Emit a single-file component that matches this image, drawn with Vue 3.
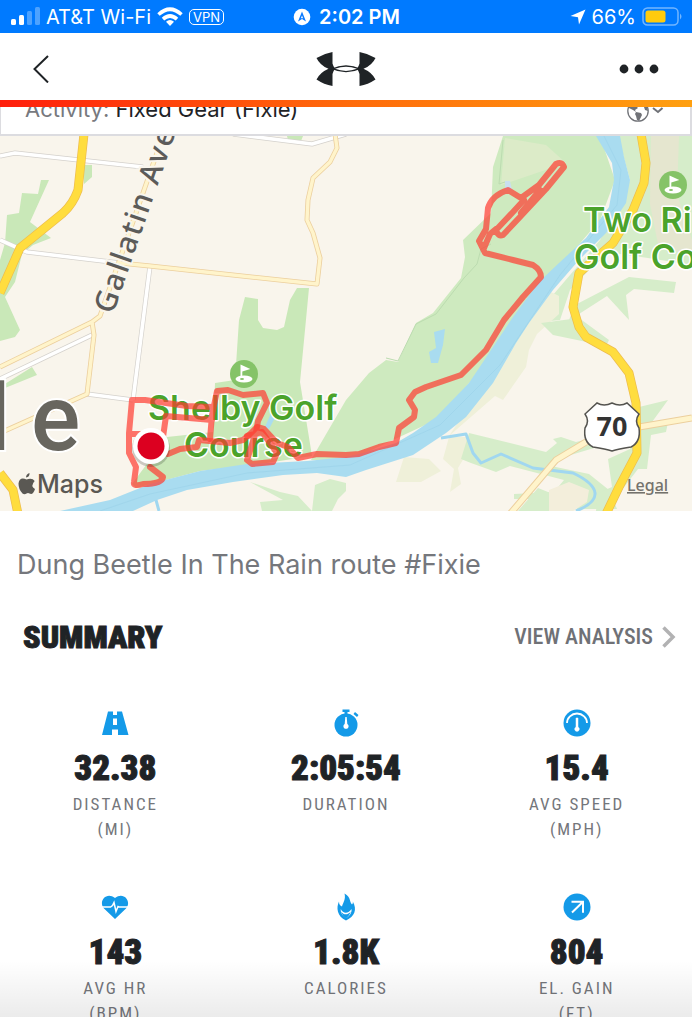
<script setup>
const stats = [
  { icon: 'road', value: '32.38', label: 'DISTANCE', unit: '(MI)' },
  { icon: 'watch', value: '2:05:54', label: 'DURATION', unit: '' },
  { icon: 'gauge', value: '15.4', label: 'AVG SPEED', unit: '(MPH)' },
  { icon: 'heart', value: '143', label: 'AVG HR', unit: '(BPM)' },
  { icon: 'flame', value: '1.8K', label: 'CALORIES', unit: '' },
  { icon: 'arrow', value: '804', label: 'EL. GAIN', unit: '(FT)' },
]
</script>

<template>
  <div class="app">
    <div class="status">
      <div class="status-side">
        <svg width="30" height="20" viewBox="0 0 30 20" fill="#fff">
          <rect x="1" y="12" width="5" height="6" rx="1.5" />
          <rect x="9" y="8" width="5" height="10" rx="1.5" />
          <rect x="17" y="4" width="5" height="14" rx="1.5" opacity=".3" />
          <rect x="25" y="0" width="5" height="18" rx="1.5" opacity=".3" />
        </svg>
        <span>AT&amp;T Wi-Fi</span>
        <svg width="26" height="20" viewBox="0 0 26 20" fill="none" stroke="#fff" stroke-width="3.6">
          <path d="M1.5 7.5Q13-3 24.5 7.5" />
          <path d="M6 12.2Q13 5.8 20 12.2" />
          <path d="M13 19l-4-4.3q4-3.2 8 0z" fill="#fff" stroke="none" />
        </svg>
        <span class="vpn">VPN</span>
      </div>
      <div class="status-mid">
        <svg width="18" height="18" viewBox="0 0 18 18">
          <circle cx="9" cy="9" r="8.3" fill="#fff" />
          <path d="M9 3.5L13 13.5 9 11 5 13.5z" fill="#0a7aff" />
          <path d="M9 7.5l1.2 3L9 10l-1.2.5z" fill="#fff" />
        </svg>
        <b>2:02 PM</b>
      </div>
      <div class="status-side right">
        <svg width="16" height="16" viewBox="0 0 16 16"><path d="M15.5.5L9 15.5 8 8.3.5 7z" fill="#fff" /></svg>
        <span>66%</span>
        <svg width="41" height="20" viewBox="0 0 41 20">
          <rect x="1" y="1" width="35" height="17" rx="4.5" fill="none" stroke="#fff" stroke-opacity=".45" stroke-width="1.5" />
          <rect x="3.5" y="3.5" width="20" height="12" rx="2.5" fill="#ffcb0d" />
          <path d="M38 6.5q3 3 0 6z" fill="#fff" opacity=".45" />
        </svg>
      </div>
    </div>

    <header class="nav">
      <button class="icon-btn" aria-label="Back">
        <svg width="16" height="28" viewBox="0 0 16 28" fill="none" stroke="#1f2326" stroke-width="2"><path d="M15 1L1.5 14 15 27.5" /></svg>
      </button>
      <svg class="logo" width="60" height="34" viewBox="0 0 60 34" fill="#1f2326">
        <path d="M.5 6Q8 1.500 16.500 0V11.500Q17.300 14.500 19 16.800Q17.300 19 16.500 22V34Q8 32.500.5 27.500Q4 20.500 12.500 16.800Q4 13.500.5 6z" />
        <path d="M59.500 6Q52 1.500 43.500 0V11.500Q42.700 14.500 41 16.800Q42.700 19 43.500 22V34Q52 32.500 59.500 27.500Q56 20.500 47.500 16.800Q56 13.500 59.500 6z" />
        <path fill-rule="evenodd" d="M15 16.800Q30 9.800 45 16.800Q30 23.800 15 16.800zM19 16.800Q30 21 41 16.800Q30 12.600 19 16.800z" />
      </svg>
      <button class="icon-btn" aria-label="More">
        <svg width="40" height="10" viewBox="0 0 40 10" fill="#1f2326"><circle cx="5" cy="5" r="4.4" /><circle cx="20" cy="5" r="4.4" /><circle cx="35" cy="5" r="4.4" /></svg>
      </button>
    </header>
    <div class="stripe"></div>

    <div class="activity">
      <div class="activity-text"><span class="muted">Activity:</span> Fixed Gear (Fixie)</div>
      <button class="icon-btn privacy" aria-label="Privacy">
        <svg width="38" height="24" viewBox="0 0 38 24">
          <circle cx="12" cy="12" r="10.2" fill="none" stroke="#707277" stroke-width="1.3" />
          <path d="M3 7l5-5 4 2-2 3 2 2-3 2 1 2-3-2-4-2zM10 13l5 1 1 2-3 6-2-1-1-4-1-2zM15 3l6 4 1 5-3-1-1-3-3-1z" fill="#707277" />
          <path d="M27 9l5 4 4.5-4" fill="none" stroke="#707277" stroke-width="2" />
        </svg>
      </button>
    </div>

    <main class="content">
      <svg class="map" viewBox="0 136 692 375" role="img" aria-label="Route map">
        <rect y="136" width="692" height="375" fill="#f9f5ec" />
        <!-- parks -->
        <g fill="#c9e8b8">
          <path d="M41 180H49L30 222 51 238 33 245 22 254 15 282 5 297 20 330 15 337 0 341V260L5 243 7 215 19 213 22 193 38 194z" />
          <path d="M83 165h9v12l-8 7zM287 136h16l-2 5-13-1zM0 387l32-20 5 8L5 388z" />
          <path d="M245 297L258 299V320L263 328 277 330 284 327 290 300 297 288H309L305 330 300 382 312 456 260 464 200 471 136 488 132 484 167 437 213 432 215 383 235 380 239 320z" />
        </g>
        <path fill="#ceeabf" d="M503 136H600L615 180 600 220 540 290 490 360 436 420 350 460H311L346 400 369 373 386 360 398 362 416 323 433 313 461 278 465 257 463 240 491 213 493 167z" />
        <path fill="#dcebc8" d="M505 138L546 145 566 163 501 185z" />
        <path fill="#c9dff0" d="M505 181h5l2 9h-7z" />
        <path fill="none" stroke="#bcdcb0" d="M503 140L499 184 505 182M491 244l-10 5-4 15-13 14-28 36-20 10-18 37-12-3" />
        <path fill="#d6edca" d="M618 136H692V265L648 258 606 252 570 290 560 320 529 323 600 240 630 180z" />
        <path fill="#e5e6cf" d="M651 136h28l-2 58 15 46v18l-34-14-8-40z" />
        <path fill="#eff0d9" d="M547 290l12 6v18l-22 20-8 16-3 17-23 33-8-4-46 40 80-120zM404 457l25 2 12 12-20 11-25 0zM449 437l18 0 0 16-9 15 3 16-11 8 4-23-11-10z" />
        <g fill="#d6edca">
          <path d="M629 277l47 5-2 11-40-4-8 6 3 25-22-24-28 18-5 14-7-3 8-20z" />
          <path d="M541 323l38-5 30 22-3 6-53-11zM469 433l77 19 11-9-4-4 8-2 15 5 8-2 10 8-40 12-3 6 38 8 20 16 8 19h-40l0-12-18 2-45 0v-5l40-2 10-12-54-14-14 6-25-9-10-4z" />
          <path d="M538 488l20 8-6 15h-34z" />
          <path d="M639 407l29-7-16 22 16 0-2 10-15 3-4 34-9 0-20 26-14 16h-8l2-18 14-6-4-28 22-10z" />
          <path d="M250 482l33 18-23 2 2 9h50l3-26 15-6 16 4v8l-8 8-6 12h-20l-14-15-18-4z" />
        </g>
        <path fill="#f3eedb" d="M549 490l20-8 20 8-2 12-14 9h-24z" />
        <!-- water -->
        <path fill="#a9dcf0" d="M596 136L612 163 614 180 609 207 586 238 559 263 539 282 513 317 489 353 469 383 436 417 413 433 396 443 363 453 346 457 307 461 247 464 200 471 150 484 110 500 60 511H133L157 500 187 490 233 482 283 475 317 473 346 477 366 470 413 455 446 433 466 417 493 383 516 343 529 323 553 290 579 260 606 233 626 203 630 180 624 157 620 136z" />
        <path fill="none" stroke="#97cfe8" opacity=".5" d="M604 136L621 170 617 205 560 275 500 365 440 425 350 465 247 473 150 494 100 511" />
        <path fill="#a9dcf0" d="M434 332l11-3-2 16-5 18h-7l-2-11 7-4zM272 398l5 16-8 15-4-2 6-14z" />
        <path fill="none" stroke="#a0d7f0" stroke-width="3" stroke-linejoin="round" d="M441 438L466 434 473 453 481 463 501 454 533 468 573 473Q594 483 595 493Q596 503 576 511M156 500l3 11" />
        <!-- streets: each is a casing with a lighter line on top -->
        <g fill="none" stroke-linejoin="round">
          <path stroke="#d4d1cc" stroke-width="5" d="M0 156L15 153 143 167M0 240L27 252 120 263M233 134L312 144 346 134M0 379L92 335M87 394L133 400M150 266L133 400" />
          <path stroke="#fff" stroke-width="3.6" d="M0 156L15 153 143 167M0 240L27 252 120 263M233 134L312 144 346 134M0 379L92 335M87 394L133 400M150 266L133 400" />
          <path stroke="#eccf9d" stroke-width="5" d="M120 263L150 266 317 284 320 258 313 233 307 220 308 200 313 178 330 162 337 148 335 134M158 150L100 316 92 322 0 367M92 322L94 335 87 394 0 433" />
          <path stroke="#fff4cb" stroke-width="3.4" d="M120 263L150 266 317 284 320 258 313 233 307 220 308 200 313 178 330 162 337 148 335 134M158 150L100 316 92 322 0 367M92 322L94 335 87 394 0 433" />
          <path stroke="#eccf9d" stroke-width="7" d="M692 418L639 427 586 442 556 460 510 514" />
          <path stroke="#fff4cb" stroke-width="5" d="M692 418L639 427 586 442 556 460 510 514" />
          <path stroke="#edbc4e" stroke-width="9" d="M84 134L78 190Q73 204 63 213L20 248 0 293M0 473L13 490 18 514M641 134L646 163 644 183 633 210 613 243 579 273 573 307 579 327 586 337 613 352 629 373 636 403 637 453 619 487 606 514" />
          <path stroke="#ffdd3e" stroke-width="7.6" d="M84 134L78 190Q73 204 63 213L20 248 0 293M0 473L13 490 18 514M641 134L646 163 644 183 633 210 613 243 579 273 573 307 579 327 586 337 613 352 629 373 636 403 637 453 619 487 606 514" />
        </g>
        <!-- golf pins -->
        <g v-for="p in [[244, 374], [673, 185]]" :key="p[0]" :transform="`translate(${p[0]} ${p[1]})`">
          <circle r="14" fill="#85c368" />
          <ellipse cx="0" cy="5" rx="8.5" ry="3.5" fill="#fff" />
          <path d="M-3.5-9.5v14h1.8v-7l8-2.500z" fill="#fff" />
          <ellipse cx="-2" cy="5" rx="2" ry="1" fill="#85c368" />
        </g>
        <!-- map labels -->
        <g class="place">
          <text x="148" y="420">Shelby Golf</text>
          <text x="184" y="457">Course</text>
          <text x="583" y="232">Two Ri</text>
          <text x="574" y="269">Golf Co</text>
        </g>
        <text class="street" transform="translate(113 315) rotate(-71)">Gallatin Ave</text>
        <text class="city" x="-13 31" y="450">le</text>
        <!-- recorded route -->
        <g fill="none" stroke="#ff3b30" stroke-opacity=".7" stroke-width="6" stroke-linejoin="round" stroke-linecap="round">
          <path d="M168 454L180 449 197 447 199 440 230 443 243 440 250 434 257 427 264 429 277 443 288 447 298 458 317 454 346 455 359 454 379 447 396 443 399 428 414 417 415 410 409 400 415 392 426 387 461 375 486 350 504 320 523 297 541 277Q541 270 533 265L513 260 485 253 479 241 486 229 488 208Q492 195 508 190L521 198 539 185 556 164Q562 161 564 167L546 189 519 218 503 235Q498 237 496 230L513 212 524 200M496 229L490 234 484 248M521 213L540 190" />
          <path d="M150 467L163 477Q162 484 143 484Q133 487 134 482L136 467 129 453 129 433 132 400 145 400 187 406 212 407M166 416L212 420M166 416L163 437M130 434H148M210 439L212 415 217 391 228 390 243 395 263 393 267 403 258 421 256 432 247 460 252 464 273 462 277 453 262 432 247 436" />
        </g>
        <circle cx="151" cy="448" r="19" fill="#000" opacity=".18" />
        <circle cx="151" cy="446" r="18" fill="#fff" />
        <circle cx="151" cy="446" r="13.5" fill="#dc0020" />
        <!-- US 70 shield -->
        <path d="M597 403q7 4 15 0q8 4 15 0l12 11q-5 7 0 14q2 14-8 19q-13 2-19 4q-6-2-19-4q-10-5-8-19q5-7 0-14z" fill="#fff" stroke="#54534f" stroke-width="1.5" />
        <text class="shield" x="612" y="436">70</text>
        <!-- attribution -->
        <path transform="translate(18 473)" fill="#5a5853" d="M8 4.500q0-3.500 3.500-4.500q.3 4-3.500 4.500zM8.500 6.500q-7-3-8 4q0 6 4 10q2 1.500 4 0q1.500-.8 3 0q2 1 3.500-.5q1.500-2 2-4q-5-3-.3-8q-2.500-3.500-8.200-1.500z" />
        <text class="maps" x="37" y="493">Maps</text>
        <a href="#legal"><text class="legal" x="627" y="491">Legal</text></a>
      </svg>

      <p class="title">Dung Beetle In The Rain route #Fixie</p>

      <div class="summary-head">
        <h2>SUMMARY</h2>
        <a href="#analysis" class="analysis">VIEW ANALYSIS
          <svg width="14" height="22" viewBox="0 0 14 22" fill="none" stroke="#b2b2b3" stroke-width="3.5"><path d="M1.5 1.5L11 11 1.5 20.5" /></svg>
        </a>
      </div>

      <section class="stats">
        <div v-for="s in stats" :key="s.label" class="stat">
          <svg width="28" height="28" viewBox="0 0 28 28" fill="#149ae8">
            <path v-if="s.icon === 'road'" fill-rule="evenodd" d="M7 2.500h5V6h4V2.500h5L27.500 26H17v-5.500h-6V26H1zM12 9.500V16h4V9.500z" />
            <template v-else-if="s.icon === 'watch'">
              <circle cx="14" cy="16" r="11.5" />
              <path d="M10.500.5h7v2.500h-2V6h-3V3h-2zM21.500 5l1.500-2 3.500 3-1.500 2z" />
              <path d="M13.300 8h1.400l.6 7a2.600 2.600 0 1 1-2.600 0z" fill="#fff" />
            </template>
            <template v-else-if="s.icon === 'gauge'">
              <circle cx="14" cy="14" r="13.5" />
              <path d="M4 14a10 9.500 0 0 1 20 0" fill="none" stroke="#fff" stroke-width="1.8" />
              <path d="M13 9h2v9a2.300 2.300 0 1 1-2 0z" fill="#fff" stroke="#fff" stroke-width=".5" />
            </template>
            <template v-else-if="s.icon === 'heart'">
              <path d="M14 26L3 15.500C-3 9 5-2 14 5C23-2 31 9 25 15.500z" />
              <path d="M0 14h9.500l2-1.500 1.500-3 2 9 2-5 1 .5h10" fill="none" stroke="#fff" stroke-width="1.5" />
            </template>
            <template v-else-if="s.icon === 'flame'">
              <path d="M12.500.5c7 4 4.500 8 7.500 11c1-1 1-2 .8-3c4.500 8 2 15-6.800 19c-9-4-10-13-7-19c0 3 1 4 3 5c1-4 4-7 2.500-13z" />
              <path d="M8.800 16c2.500 5.500 8 4.500 10.700 0c.5 4-2 7-5.300 9c-3.400-2-5.900-5-5.400-9z" fill="#fff" />
              <path d="M9 18.500c3 4 7 3.500 9.800 0c-1 3-2.500 5-4.800 7c-2.500-2-4-4-5-7z" />
            </template>
            <template v-else>
              <circle cx="14" cy="14" r="13.5" />
              <path d="M8.500 8.700H20v11M20 8.700L9 19.500" fill="none" stroke="#fff" stroke-width="2" />
            </template>
          </svg>
          <strong>{{ s.value }}</strong>
          <span>{{ s.label }}</span>
          <span v-if="s.unit">{{ s.unit }}</span>
        </div>
      </section>
      <div class="fade"></div>
    </main>
  </div>
</template>

<style>
body { margin: 0; background: #fff; }
</style>

<style scoped>
.app { height: 100vh; box-sizing: border-box; padding-bottom: 6px; display: flex; flex-direction: column; overflow: hidden; font-family: Inter, "Liberation Sans", sans-serif; color: #1f2326; background: #fff; }
.app svg { display: block; flex: none; }
.status { flex: none; height: 33px; padding: 0 9px 0 10px; display: flex; align-items: center; background: #007aff; color: #fff; font-size: 20px; line-height: 24px; white-space: nowrap; }
.status-side { flex: 1; display: flex; align-items: center; gap: 6px; }
.right { justify-content: flex-end; }
.status-mid { display: flex; align-items: center; gap: 8px; }
.status-mid b { font-weight: 600; }
.vpn { border: 1px solid #fff; border-radius: 5px; padding: 0 3px; font-size: 13px; line-height: 14px; }
.nav { flex: none; height: 67px; padding: 4px 33px 0; box-sizing: border-box; display: grid; grid-template-columns: 1fr auto 1fr; align-items: center; }
.icon-btn { border: 0; padding: 0; background: none; }
.nav .icon-btn:last-child { justify-self: end; }
.nav .icon-btn:first-child { justify-self: start; }
.stripe { flex: none; height: 7px; background: linear-gradient(90deg, #ff1e0c, #ff6a0a 50%, #ffa010); }
.activity { flex: none; height: 29px; box-sizing: border-box; padding: 0 26px 11px 24px; border: solid #dcdce0; border-width: 0 2px 2px 1px; display: flex; justify-content: space-between; align-items: flex-end; overflow: hidden; }
.activity-text { font-size: 22px; line-height: 28px; }
.muted { color: #77797e; }
.content { flex: 1; min-height: 0; position: relative; overflow: hidden; }
.map { width: 100%; height: auto; }
.place { font: 600 34px Inter, sans-serif; fill: #4ba32b; stroke: #fff; stroke-width: 3px; stroke-linejoin: round; paint-order: stroke; }
.street { font: 500 30px "Noto Sans", sans-serif; letter-spacing: 2px; fill: #5c5b59; stroke: #f9f5ec; stroke-width: 4px; paint-order: stroke; }
.city { font: 500 92px Roboto, sans-serif; fill: #68665f; stroke: #fff; stroke-width: 4px; paint-order: stroke; }
.shield { font: 700 27px "Noto Sans", sans-serif; text-anchor: middle; fill: #333; }
.maps { font: 500 25px Inter, sans-serif; fill: #5a5853; }
.legal { font: 500 16px "Noto Sans", sans-serif; fill: #74726c; text-decoration: underline; }
.title { margin: 36px 17px 0; font-size: 27px; line-height: 36px; color: #75777c; }
.summary-head { margin: 34px 16px 0 23px; height: 40px; display: flex; align-items: center; justify-content: space-between; }
h2 { margin: 0; font: 900 32px/40px "Roboto Condensed", Roboto, sans-serif; -webkit-text-stroke: 1px; }
.analysis { display: flex; align-items: center; gap: 9px; font: 500 22px/40px "Roboto Condensed", Roboto, sans-serif; color: #6f7176; text-decoration: none; }
.stats { display: grid; grid-template-columns: repeat(3, 1fr); grid-auto-rows: 184px; padding-top: 52px; }
.stat { display: flex; flex-direction: column; align-items: center; font-family: "Roboto Condensed", Roboto, sans-serif; }
.stat strong { font-size: 35px; font-weight: 900; line-height: 40px; margin: 12px 0 3px; -webkit-text-stroke: 1px; }
.stat span { font-size: 17px; line-height: 25px; letter-spacing: 2px; color: #74767b; }
.fade { position: absolute; left: 0; right: 0; bottom: 0; height: 56px; background: linear-gradient(transparent, rgba(0, 0, 0, 0.08)); pointer-events: none; }
</style>
